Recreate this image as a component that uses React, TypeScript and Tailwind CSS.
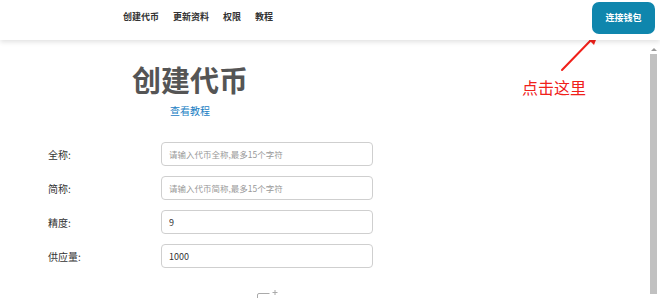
import React from "react"

const fields = [
  { label: "全称:", placeholder: "请输入代币全称,最多15个字符", value: "" },
  { label: "简称:", placeholder: "请输入代币简称,最多15个字符", value: "" },
  { label: "精度:", placeholder: "", value: "9" },
  { label: "供应量:", placeholder: "", value: "1000" },
]

const font = { fontFamily: '"Microsoft YaHei", "Noto Sans CJK SC", "Noto Sans", sans-serif' }

export default function App() {
  return (
    <div className="relative w-[660px] h-[298px] overflow-hidden bg-white text-[#333]" style={font}>
      {/* 顶部导航 */}
      <header className="relative z-10 h-[40px] bg-white flex items-start shadow-[0_2px_5px_rgba(0,0,0,0.12)]">
        <nav className="flex gap-[14px] pl-[123px] pt-[11px] text-[9px] leading-[12px] font-bold text-[#333]">
          <span>创建代币</span>
          <span>更新资料</span>
          <span>权限</span>
          <span>教程</span>
        </nav>
        <button className="ml-auto mr-[5px] mt-[2px] w-[63px] h-[32px] rounded-[7px] bg-[#0f86ad] text-white text-[9px] font-bold">
          连接钱包
        </button>
      </header>

      {/* 内容 */}
      <main className="relative pt-[21px]">
        <div className="w-[380px] flex flex-col items-center">
          <h1 className="text-[29px] leading-[36px] font-bold text-[#555]">创建代币</h1>
          <a className="mt-[7px] text-[10px] leading-[14px] text-[#1a80c4]">查看教程</a>
        </div>

        <div className="mt-[24px] flex flex-col gap-[10px]">
          {fields.map((f) => (
            <div key={f.label} className="flex items-center">
              <label className="w-[161px] pl-[48px] text-[10px] text-[#333]">{f.label}</label>
              <input
                readOnly
                value={f.value}
                placeholder={f.placeholder}
                className="w-[212px] h-[24px] rounded-[4px] border border-[#cfcfcf] px-[7px] text-[9px] text-[#333] placeholder:text-[8.5px] placeholder:text-[#999] outline-none"
              />
            </div>
          ))}
        </div>

        {/* 底部上传图标 */}
        <div className="mt-[21px] pl-[256px]">
          <svg width="26" height="12" viewBox="0 0 26 12" fill="none" stroke="#aaa" strokeWidth="1">
            <path d="M1.5 11.5 V6 Q1.5 4.5 3 4.5 H13.5" />
            <path d="M19 1 V6 M16.5 3.5 H21.5" />
          </svg>
        </div>
      </main>

      {/* 滚动条 */}
      <div className="absolute right-[3px] top-[48px] bottom-[4px] w-[7px] flex flex-col items-center">
        <div className="w-0 h-0 border-l-[3px] border-r-[3px] border-b-[3px] border-l-transparent border-r-transparent border-b-[#999]" />
        <div className="mt-[3px] flex-1 w-[7px] bg-[#c1c1c1]" />
      </div>

      {/* 标注 */}
      <svg className="absolute left-0 top-0 pointer-events-none" width="660" height="298">
        <path d="M562 70 L593 38" stroke="#f0201a" strokeWidth="2" strokeLinecap="round" />
        <polygon points="599,32 586,37 594,45" fill="#f0201a" />
      </svg>
      <span className="absolute left-[522px] top-[75px] text-[16px] text-[#f0201a]">点击这里</span>
    </div>
  )
}
